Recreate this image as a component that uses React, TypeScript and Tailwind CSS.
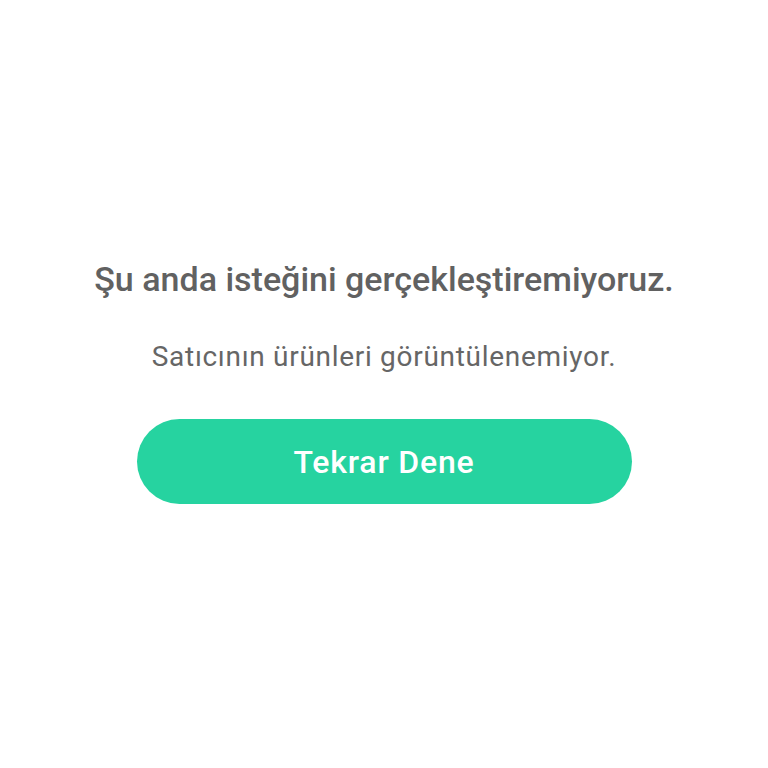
export default function App() {
  return (
    <div className="flex h-[768px] w-full flex-col items-center justify-center bg-white pb-[2px] font-['Roboto',sans-serif]">
      <h1 className="text-[34px] font-medium leading-none text-[#616161]">
        Şu anda isteğini gerçekleştiremiyoruz.
      </h1>
      <p className="mt-[47px] text-[28px] leading-none tracking-[0.7px] text-[#666666]">
        Satıcının ürünleri görüntülenemiyor.
      </p>
      <button className="mt-[48px] h-[85px] w-[495px] rounded-full bg-[#26d3a0] text-[32px] font-medium tracking-[0.8px] text-white">
        Tekrar Dene
      </button>
    </div>
  );
}
